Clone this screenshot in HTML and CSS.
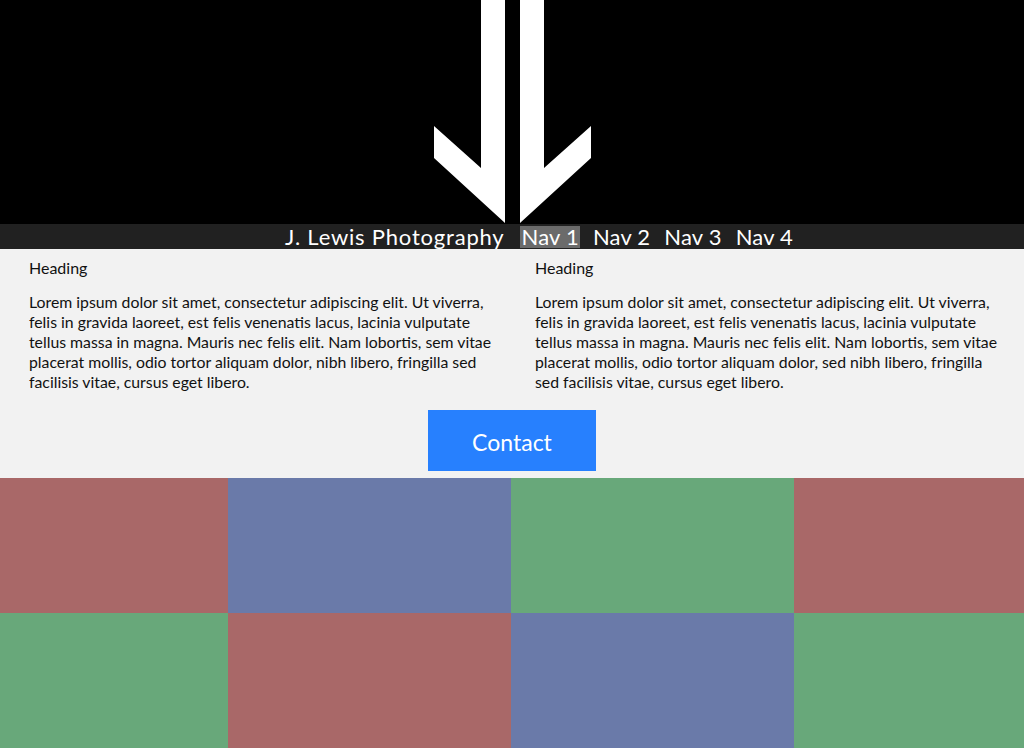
FILE: index.html
```html
<!DOCTYPE html>
<html lang="en">
<head>
<meta charset="utf-8">
<title>J. Lewis Photography</title>
<link rel="stylesheet" href="styles.css">
</head>
<body>
<header class="hero">
  <svg class="arrows" width="1024" height="224" viewBox="0 0 1024 224" aria-hidden="true">
    <polygon points="481,0 505,0 505,223 434,158 434,126 481,168" fill="#fff"/>
    <polygon points="520,0 544,0 544,168 591,126 591,158 520,223" fill="#fff"/>
  </svg>
</header>
<nav class="navbar">
  <span class="brand">J. Lewis Photography</span>
  <a class="nav-link active" href="#">Nav 1</a>
  <a class="nav-link" href="#">Nav 2</a>
  <a class="nav-link" href="#">Nav 3</a>
  <a class="nav-link" href="#">Nav 4</a>
</nav>
<main class="content">
  <div class="columns">
    <section class="col">
      <h2 class="heading">Heading</h2>
      <p class="text">Lorem ipsum dolor sit amet, consectetur adipiscing elit. Ut viverra, felis in gravida laoreet, est felis venenatis lacus, lacinia vulputate tellus massa in magna. Mauris nec felis elit. Nam lobortis, sem vitae placerat mollis, odio tortor aliquam dolor, nibh libero, fringilla sed facilisis vitae, cursus eget libero.</p>
    </section>
    <section class="col">
      <h2 class="heading">Heading</h2>
      <p class="text">Lorem ipsum dolor sit amet, consectetur adipiscing elit. Ut viverra, felis in gravida laoreet, est felis venenatis lacus, lacinia vulputate tellus massa in magna. Mauris nec felis elit. Nam lobortis, sem vitae placerat mollis, odio tortor aliquam dolor, sed nibh libero, fringilla sed facilisis vitae, cursus eget libero.</p>
    </section>
  </div>
  <div class="cta">
    <a class="button" href="#">Contact</a>
  </div>
</main>
<section class="tiles">
  <div class="tile red"></div>
  <div class="tile blue"></div>
  <div class="tile green"></div>
  <div class="tile red"></div>
  <div class="tile green"></div>
  <div class="tile red"></div>
  <div class="tile blue"></div>
  <div class="tile green"></div>
</section>
</body>
</html>
```
FILE: styles.css
```css
* { box-sizing: border-box; }
html, body { margin: 0; padding: 0; }
body {
  width: 1024px;
  height: 748px;
  overflow: hidden;
  font-family: "Lato", "Open Sans", sans-serif;
  background: #f2f2f2;
  color: #111;
}
.hero {
  height: 224px;
  background: #000;
}
.arrows { display: block; }
.navbar {
  height: 25px;
  background: #212121;
  display: flex;
  align-items: center;
  padding-left: 285px;
  color: #fff;
  font-size: 22px;
  line-height: 22px;
}
.brand {
  margin-right: 16px;
  letter-spacing: 0.8px;
}
.nav-link {
  color: #fff;
  text-decoration: none;
  padding: 0 1px;
  margin-right: 12px;
  line-height: 22px;
  letter-spacing: 0.2px;
}
.nav-link.active { background: #6b6b6b; }
.content {
  height: 229px;
  background: #f2f2f2;
  padding-top: 9px;
}
.columns {
  display: grid;
  grid-template-columns: 506px 506px;
}
.col { padding-left: 29px; padding-right: 7px; }
.heading {
  margin: 0;
  font-size: 16px;
  font-weight: normal;
  line-height: 20px;
}
.text {
  margin: 14px 0 0;
  font-size: 15.8px;
  line-height: 20px;
}
.cta {
  display: flex;
  justify-content: center;
  margin-top: 18px;
}
.button {
  width: 168px;
  height: 61px;
  background: #2780fe;
  color: #fff;
  font-size: 23px;
  text-decoration: none;
  display: flex;
  align-items: center;
  justify-content: center;
  padding-top: 2px;
}
.tiles {
  display: grid;
  grid-template-columns: 228px 283px 283px 230px;
  grid-template-rows: 135px 135px;
}
.red { background: #a96868; }
.blue { background: #6a7aa9; }
.green { background: #68a87a; }
```
